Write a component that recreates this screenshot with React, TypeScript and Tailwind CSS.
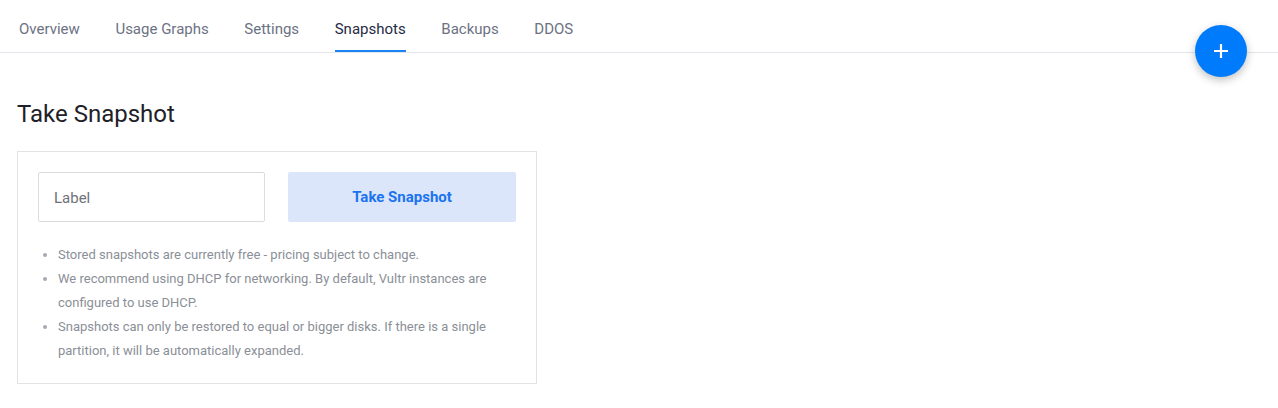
import React from 'react';

const tabs = ['Overview', 'Usage Graphs', 'Settings', 'Snapshots', 'Backups', 'DDOS'];

const notes = [
  'Stored snapshots are currently free - pricing subject to change.',
  'We recommend using DHCP for networking. By default, Vultr instances are configured to use DHCP.',
  'Snapshots can only be restored to equal or bigger disks. If there is a single partition, it will be automatically expanded.',
];

export default function App() {
  return (
    <div className="relative min-h-[408px] bg-white" style={{ fontFamily: 'Roboto, "Liberation Sans", sans-serif' }}>
      <nav className="flex h-[53px] gap-[35.6px] border-b border-[#e4e5ea] pl-[19px]">
        {tabs.map((t) => (
          <div
            key={t}
            className={
              'flex items-center border-b-2 pt-[8px] text-[15px] ' +
              (t === 'Snapshots' ? 'border-[#1a84f5] text-[#262b45]' : 'border-transparent text-[#6c7283]')
            }
          >
            {t}
          </div>
        ))}
      </nav>

      <button className="absolute left-[1195px] top-[25px] flex h-[52px] w-[52px] items-center justify-center rounded-full bg-[#007bfc] shadow-[0_3px_8px_rgba(0,0,0,0.25)]">
        <svg width="16" height="16" viewBox="0 0 16 16" fill="none" stroke="white" strokeWidth="2.2">
          <path d="M8 1v14M1 8h14" />
        </svg>
      </button>

      <div className="px-[17px]">
        <h2 className="mt-[45px] text-[24px] leading-[32px] text-[#1e2127]">Take Snapshot</h2>
        <div className="mt-[21px] w-[520px] border border-[#e3e3e3] px-5 pb-5 pt-5">
          <div className="grid grid-cols-[227px_228px] gap-[23px]">
            <input
              placeholder="Label"
              className="h-[50px] rounded-[2px] border border-[#dcdcdc] px-[15px] pt-[2px] text-[15px] text-[#333] placeholder:text-[#6f727a] outline-none"
            />
            <button className="h-[50px] rounded-[2px] bg-[#dce6fa] text-[15px] font-bold text-[#1a73f0]">Take Snapshot</button>
          </div>
          <ul className="mt-[21px] list-disc pl-5 text-[13px] leading-[24px] text-[#8b8f97] marker:text-[#a8abb2]">
            {notes.map((n) => (
              <li key={n}>{n}</li>
            ))}
          </ul>
        </div>
      </div>
    </div>
  );
}
